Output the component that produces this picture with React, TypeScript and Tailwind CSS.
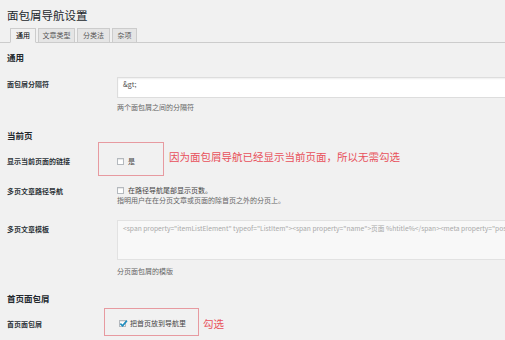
import React from "react";

const Checkbox = ({ checked = false }: { checked?: boolean }) => (
  <span className="relative inline-block w-[7px] h-[7px] bg-white border border-[#b4b9be] shadow-[inset_0_1px_1px_rgba(0,0,0,0.1)] shrink-0">
    {checked && (
      <svg viewBox="0 0 10 10" className="absolute left-[-1px] top-[-2px] w-[9px] h-[9px]">
        <path d="M1.5 5.2 L4 7.6 L8.8 1.8" fill="none" stroke="#1e8cbe" strokeWidth="1.8" />
      </svg>
    )}
  </span>
);

export default function App() {
  const label = "text-[7px] leading-[9px] font-bold text-[#2c3338]";
  const desc = "text-[7px] leading-[9px] text-[#666]";
  const heading = "text-[8.5px] leading-[12px] font-bold text-[#23282d]";
  return (
    <div className="w-[505px] h-[340px] overflow-hidden bg-[#f1f1f1] font-['Noto_Sans_CJK_SC','Noto_Sans',sans-serif] text-[#23282d]">
      <div className="pl-[7px]">
        <h1 className="pt-[7px] text-[11.5px] leading-[16px] font-normal text-[#23282d]">面包屑导航设置</h1>
      </div>
      <div className="mt-[5px] flex items-end h-[15px] border-b border-[#ccc] pl-[10px]">
        <div className="w-[26px] h-[15px] -mb-px border border-[#ccc] border-b-[#f1f1f1] bg-[#f1f1f1] text-[7px] leading-[12px] text-center text-[#000]">通用</div>
        <div className="ml-[2px] w-[37px] h-[14px] border border-[#ccc] border-b-0 bg-[#e5e5e5] text-[7px] leading-[12px] text-center text-[#555]">文章类型</div>
        <div className="ml-[2px] w-[33px] h-[14px] border border-[#ccc] border-b-0 bg-[#e5e5e5] text-[7px] leading-[12px] text-center text-[#555]">分类法</div>
        <div className="ml-[2px] w-[25px] h-[14px] border border-[#ccc] border-b-0 bg-[#e5e5e5] text-[7px] leading-[12px] text-center text-[#555]">杂项</div>
      </div>
      <div className="pl-[7px]">
        <h2 className={`mt-[8px] ${heading}`}>通用</h2>
        <div className="grid grid-cols-[110px_1fr]">
          <div className={`pt-[16.5px] ${label}`}>面包屑分隔符</div>
          <div className="pt-[14px]">
            <div className="w-[400px] h-[21px] bg-white border border-[#ddd] shadow-[inset_0_1px_2px_rgba(0,0,0,0.07)] pl-[5px] pt-[2px] text-[7px] leading-[9px] text-[#555]">&amp;gt;</div>
            <div className={`mt-[5px] ${desc}`}>两个面包屑之间的分隔符</div>
          </div>
        </div>

        <h2 className={`mt-[17px] ${heading}`}>当前页</h2>
        <div className="grid grid-cols-[110px_1fr]">
          <div className={`pt-[15.5px] ${label}`}>显示当前页面的链接</div>
          <div className="relative pt-[15.5px]">
            <div className="absolute left-[-19px] top-[1px] w-[66px] h-[34px] border border-[#e79aa0]" />
            <div className="absolute left-[52px] top-[9px] whitespace-nowrap text-[10.5px] leading-[14px] text-[#e8505b]">因为面包屑导航已经显示当前页面，所以无需勾选</div>
            <div className="flex items-center gap-[4px] text-[7px] leading-[9px] text-[#444]">
              <Checkbox />
              <span>是</span>
            </div>
          </div>

          <div className={`pt-[21px] ${label}`}>多页文章路径导航</div>
          <div className="pt-[20.5px]">
            <div className="flex items-center gap-[4px] text-[7px] leading-[9px] text-[#444]">
              <Checkbox />
              <span>在路径导航尾部显示页数。</span>
            </div>
            <div className={`mt-[1px] ${desc}`}>指明用户在在分页文章或页面的除首页之外的分页上。</div>
          </div>

          <div className={`pt-[19.5px] ${label}`}>多页文章模板</div>
          <div className="pt-[14.5px]">
            <div className="w-[400px] h-[40px] bg-[#f8f8f8] border border-[#e2e2e2] pl-[5px] pt-[3px] overflow-hidden whitespace-nowrap text-[6.7px] leading-[9px] text-[#a9a9a9]">
              {'<span property="itemListElement" typeof="ListItem"><span property="name">页面 %htitle%</span><meta property="pos'}
            </div>
            <div className={`mt-[7.5px] ${desc}`}>分页面包屑的模版</div>
          </div>
        </div>

        <h2 className={`mt-[15.5px] ${heading}`}>首页面包屑</h2>
        <div className="grid grid-cols-[110px_1fr]">
          <div className={`pt-[16.5px] ${label}`}>首页面包屑</div>
          <div className="relative pt-[15.5px]">
            <div className="absolute left-[-13px] top-[4px] w-[95px] h-[28px] border border-[#e79aa0]" />
            <div className="absolute left-[86px] top-[13px] whitespace-nowrap text-[10.5px] leading-[14px] text-[#e8505b]">勾选</div>
            <div className="flex items-center gap-[4px] text-[7px] leading-[9px] text-[#444] pl-[2px]">
              <Checkbox checked />
              <span>把首页放到导航里</span>
            </div>
          </div>
        </div>
      </div>
    </div>
  );
}
